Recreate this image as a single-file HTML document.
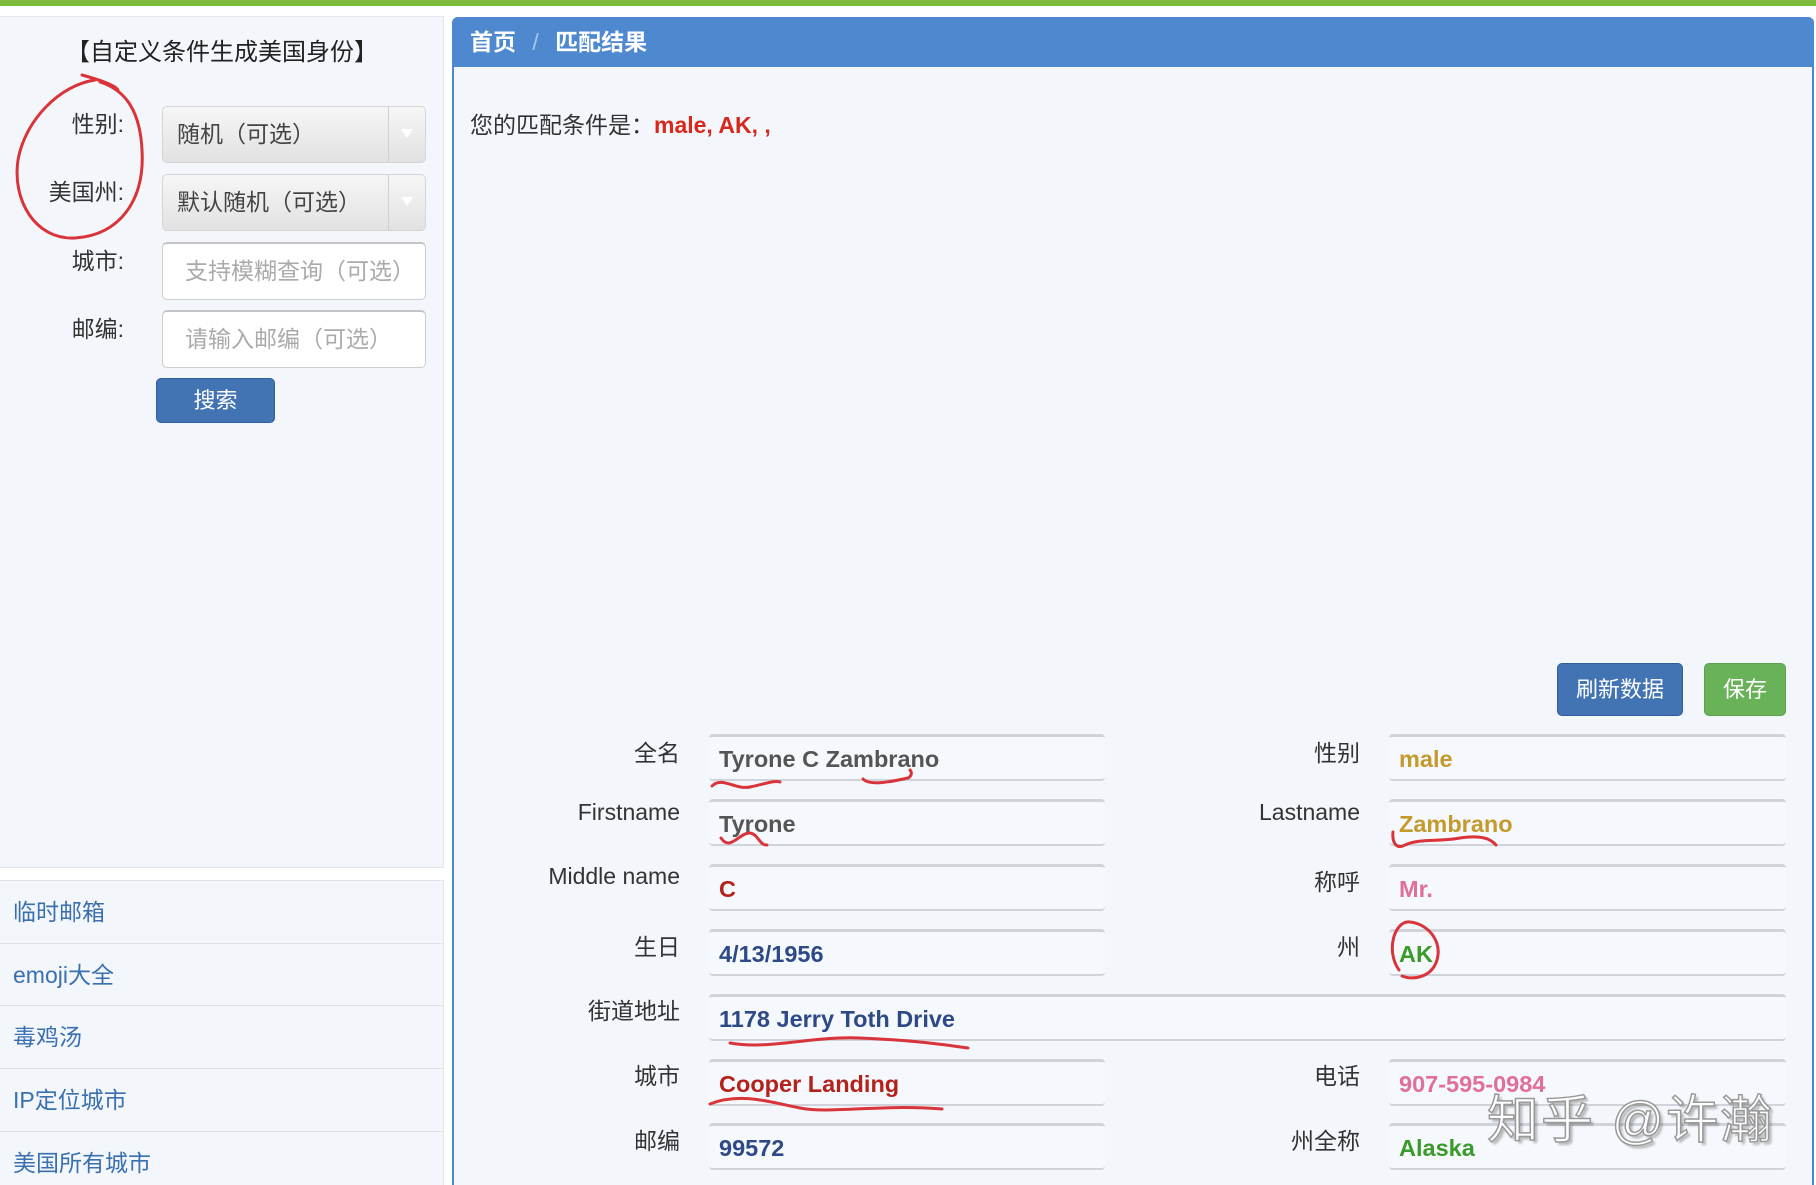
<!DOCTYPE html>
<html><head><meta charset="utf-8"><style>
*{margin:0;padding:0;box-sizing:border-box}
html,body{width:1816px;height:1185px;overflow:hidden}
body{background:#fff;position:relative;font-family:"Liberation Sans","Noto Sans CJK SC",sans-serif;color:#333}
.abs{position:absolute}
.top{left:0;top:0;width:1816px;height:6px;background:#7cbb3c}
.lp{left:0;top:16px;width:444px;height:852px;background:#f3f7fc;border:1px solid #e3e7ec;border-left:none}
.title{left:0;width:444px;top:32px;text-align:center;font-size:24px;color:#222}
.lbl{font-size:23px;color:#333;text-align:right;width:124px;left:0}
.sel{left:162px;width:264px;height:57px;border:1px solid #d4d4d4;border-radius:5px;background:linear-gradient(#f6f6f6,#e2e2e2);font-size:23px;color:#444;padding-left:14px;line-height:55px}
.sel:after{content:"";position:absolute;right:0;top:0;width:36px;height:100%;border-left:1px solid #d0d0d0}
.sel i{position:absolute;right:12px;top:22px;width:0;height:0;border-left:6px solid transparent;border-right:6px solid transparent;border-top:9px solid #fff;z-index:2}
.inp{left:162px;width:264px;height:58px;border:1px solid #ccc;border-top:2px solid #c4c4c4;border-radius:5px;background:#fff;font-size:23px;color:#aaa;padding-left:22px;line-height:54px}
.btn{color:#fff;font-size:22px;text-align:center;border-radius:5px}
.menu{left:0;width:444px;height:63px;background:#f3f7fc;border-top:1px solid #dfe3e8;border-right:1px solid #e3e7ec;font-size:23px;color:#3a6fb0;padding-left:13px;line-height:62px}
.mp{left:452px;top:17px;width:1362px;height:1168px;background:#f3f7fc;border:2px solid #4e86cc;border-bottom:none;border-radius:6px 6px 0 0}
.hd{left:452px;top:17px;width:1362px;height:50px;background:#4e89d0;border-radius:6px 6px 0 0;color:#fff;font-weight:bold;font-size:23px;padding-left:18px;line-height:50px}
.fl{height:47px;border-top:3px solid #d0d4da;border-bottom:2px solid #d0d4da;border-radius:4px;font-weight:bold;font-size:23.5px;padding-left:10px;line-height:44px;background:#f5f8fc}
.rl{font-size:23px;color:#333;text-align:right;width:200px}
</style></head><body>
<div class="abs top"></div>
<div class="abs lp"></div>
<div class="abs title">【自定义条件生成美国身份】</div>
<div class="abs lbl" style="top:105px">性别:</div>
<div class="abs lbl" style="top:173px">美国州:</div>
<div class="abs lbl" style="top:242px">城市:</div>
<div class="abs lbl" style="top:310px">邮编:</div>
<div class="abs sel" style="top:106px">随机（可选）<i></i></div>
<div class="abs sel" style="top:174px">默认随机（可选）<i></i></div>
<div class="abs inp" style="top:242px">支持模糊查询（可选）</div>
<div class="abs inp" style="top:310px">请输入邮编（可选）</div>
<div class="abs btn" style="left:156px;top:378px;width:119px;height:45px;line-height:43px;background:#4274b4;border:1px solid #2f5f9e">搜索</div>
<div class="abs menu" style="top:880px">临时邮箱</div>
<div class="abs menu" style="top:943px">emoji大全</div>
<div class="abs menu" style="top:1005px">毒鸡汤</div>
<div class="abs menu" style="top:1068px">IP定位城市</div>
<div class="abs menu" style="top:1131px;height:54px">美国所有城市</div>

<div class="abs mp"></div>
<div class="abs hd">首页 <span style="color:#a9c6ea;font-weight:normal;margin:0 10px">/</span> 匹配结果</div>
<div class="abs" style="left:470px;top:106px;font-size:23px;color:#333">您的匹配条件是：<b style="color:#d8281e">male, AK, ,</b></div>
<div class="abs btn" style="left:1557px;top:663px;width:126px;height:53px;line-height:51px;background:#4274b4;border:1px solid #2f5f9e">刷新数据</div>
<div class="abs btn" style="left:1704px;top:663px;width:82px;height:53px;line-height:51px;background:#6ab25a;border:1px solid #5aa34b">保存</div>

<div class="abs rl" style="left:480px;top:734px">全名</div>
<div class="abs rl" style="left:480px;top:799px">Firstname</div>
<div class="abs rl" style="left:480px;top:863px">Middle name</div>
<div class="abs rl" style="left:480px;top:928px">生日</div>
<div class="abs rl" style="left:480px;top:992px">街道地址</div>
<div class="abs rl" style="left:480px;top:1057px">城市</div>
<div class="abs rl" style="left:480px;top:1122px">邮编</div>
<div class="abs rl" style="left:1160px;top:734px">性别</div>
<div class="abs rl" style="left:1160px;top:799px">Lastname</div>
<div class="abs rl" style="left:1160px;top:863px">称呼</div>
<div class="abs rl" style="left:1160px;top:928px">州</div>
<div class="abs rl" style="left:1160px;top:1057px">电话</div>
<div class="abs rl" style="left:1160px;top:1122px">州全称</div>

<div class="abs fl" style="left:709px;top:734px;width:396px;color:#555">Tyrone C Zambrano</div>
<div class="abs fl" style="left:709px;top:799px;width:396px;color:#555">Tyrone</div>
<div class="abs fl" style="left:709px;top:864px;width:396px;color:#b3231c">C</div>
<div class="abs fl" style="left:709px;top:929px;width:396px;color:#2d4a86">4/13/1956</div>
<div class="abs fl" style="left:709px;top:994px;width:1077px;color:#2d4a86">1178 Jerry Toth Drive</div>
<div class="abs fl" style="left:709px;top:1059px;width:396px;color:#b3231c">Cooper Landing</div>
<div class="abs fl" style="left:709px;top:1123px;width:396px;color:#2d4a86">99572</div>
<div class="abs fl" style="left:1389px;top:734px;width:397px;color:#c49a2c">male</div>
<div class="abs fl" style="left:1389px;top:799px;width:397px;color:#c49a2c">Zambrano</div>
<div class="abs fl" style="left:1389px;top:864px;width:397px;color:#e0709a">Mr.</div>
<div class="abs fl" style="left:1389px;top:929px;width:397px;color:#3a9a2a">AK</div>
<div class="abs fl" style="left:1389px;top:1059px;width:397px;color:#e0709a">907-595-0984</div>
<div class="abs fl" style="left:1389px;top:1123px;width:397px;color:#3a9a2a">Alaska</div>

<div class="abs" style="left:1487px;top:1078px;font-size:52px;color:#fff;-webkit-text-stroke:1.5px #999;text-shadow:3px 3px 2px rgba(0,0,0,.25);letter-spacing:2px">知乎 @许瀚</div>

<svg class="abs" style="left:0;top:0" width="1816" height="1185" fill="none" stroke="#d9343a" stroke-width="3" stroke-linecap="round">
<path d="M82 75 C100 80 115 85 118 90 M95 80 C60 85 25 120 18 160 C12 200 35 240 75 238 C120 235 145 200 142 150 C140 110 125 90 100 82"/>
<path d="M712 786 C722 776 735 790 750 787 C765 784 775 780 780 782"/>
<path d="M863 779 C870 786 890 782 908 778 C912 776 912 772 910 770"/>
<path d="M721 838 C730 852 740 832 750 833 C758 834 760 846 767 845"/>
<path d="M1393 832 C1392 842 1396 850 1405 845 C1420 838 1440 842 1460 838 C1480 835 1490 838 1496 845"/>
<path d="M1399 970 C1385 950 1395 920 1410 922 C1430 924 1445 945 1435 965 C1428 978 1412 980 1402 976"/>
<path d="M730 1043 C770 1050 810 1036 860 1038 C910 1040 940 1044 968 1048"/>
<path d="M710 1104 C740 1092 770 1102 800 1108 C830 1114 880 1104 942 1109"/>
</svg>
</body></html>
